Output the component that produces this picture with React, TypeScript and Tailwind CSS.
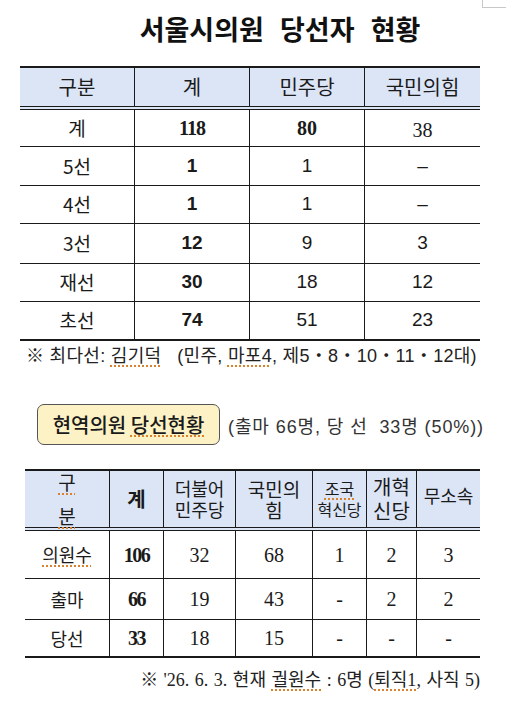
import React from "react";

const sans = "font-['Liberation_Sans','Noto_Sans_CJK_KR',sans-serif]";
const kr = "font-['Noto_Sans_CJK_KR','Liberation_Sans',sans-serif]";
const serif = "font-['Liberation_Serif','Noto_Sans_CJK_KR',serif]";
const wavy = "underline decoration-dotted decoration-[#d9822b] decoration-[1.5px] underline-offset-[3px]";

type Cell = { t: string; c: string };

const t1: { label: string; h: string; cells: Cell[] }[] = [
  { label: "계", h: "h-[37px]", cells: [
    { t: "118", c: `${serif} font-bold tracking-[-1px] text-[20px]` },
    { t: "80", c: `${serif} font-bold text-[20px]` },
    { t: "38", c: `${serif} text-[20px] pt-[4px]` },
  ] },
  { label: "5선", h: "h-[39px]", cells: [
    { t: "1", c: `${sans} font-bold text-[19px]` },
    { t: "1", c: `${sans} text-[19px]` },
    { t: "–", c: `${sans} text-[19px]` },
  ] },
  { label: "4선", h: "h-[38px]", cells: [
    { t: "1", c: `${sans} font-bold text-[19px]` },
    { t: "1", c: `${sans} text-[19px]` },
    { t: "–", c: `${sans} text-[19px]` },
  ] },
  { label: "3선", h: "h-[40px]", cells: [
    { t: "12", c: `${sans} font-bold text-[19px]` },
    { t: "9", c: `${sans} text-[19px]` },
    { t: "3", c: `${sans} text-[19px]` },
  ] },
  { label: "재선", h: "h-[38px]", cells: [
    { t: "30", c: `${sans} font-bold text-[19px]` },
    { t: "18", c: `${sans} text-[19px]` },
    { t: "12", c: `${sans} text-[19px]` },
  ] },
];

const t2Widths = ["w-[85px]", "w-[54px]", "w-[72px]", "w-[77px]", "w-[54px]", "w-[50px]", "w-[63px]"];

const t2Rows: { label: React.ReactNode; h: string; vals: string[] }[] = [
  { label: <span className={wavy}>의원수</span>, h: "h-[48px] border-b border-[#1a1a1a]", vals: ["106", "32", "68", "1", "2", "3"] },
  { label: "출마", h: "h-[41px] border-b border-[#1a1a1a]", vals: ["66", "19", "43", "-", "2", "2"] },
  { label: "당선", h: "h-[38px] border-b-2 border-[#1a1a1a]", vals: ["33", "18", "15", "-", "-", "-"] },
];

export default function App() {
  return (
    <div className={`relative w-[506px] h-[704px] bg-white text-[#1a1a1a] ${kr}`}>
      <div className="absolute right-0 top-0 w-[24px] h-[8px] border-l border-b border-[#c8c8c8]" />

      {/* Title */}
      <div className="pt-[12px] h-[66px]">
        <div className={`h-[34px] leading-[34px] pl-[54px] text-center text-[27px] font-bold [word-spacing:10px] text-[#111] ${kr}`}>
          서울시의원 당선자 현황
        </div>
      </div>

      {/* Table 1 */}
      <div className="ml-[20px] w-[460px]">
        <div className="flex h-[44px] border-t-2 border-b-4 border-double border-t-[#1a1a1a] border-b-[#1a1a1a] bg-[#dce5f6]">
          {["구분", "계", "민주당", "국민의힘"].map((t, i) => (
            <div
              key={i}
              className={`w-[115px] flex items-center justify-center text-[20px] ${i < 3 ? "border-r border-[#1a1a1a]" : ""}`}
            >
              {t}
            </div>
          ))}
        </div>
        {t1.map((r, ri) => (
          <div key={ri} className={`flex ${r.h} border-b border-[#1a1a1a]`}>
            <div className="w-[115px] flex items-center justify-center text-[19px] border-r border-[#1a1a1a]">{r.label}</div>
            {r.cells.map((c, i) => (
              <div
                key={i}
                className={`w-[115px] flex items-center justify-center ${c.c} ${i < 2 ? "border-r border-[#1a1a1a]" : ""}`}
              >
                {c.t}
              </div>
            ))}
          </div>
        ))}
        <div className="flex h-[39px] border-b-2 border-[#1a1a1a]">
          <div className="w-[115px] flex items-center justify-center text-[19px] border-r border-[#1a1a1a]">초선</div>
          <div className={`w-[115px] flex items-center justify-center ${sans} font-bold text-[19px] border-r border-[#1a1a1a]`}>74</div>
          <div className={`w-[115px] flex items-center justify-center ${sans} text-[19px] border-r border-[#1a1a1a]`}>51</div>
          <div className={`w-[115px] flex items-center justify-center ${sans} text-[19px]`}>23</div>
        </div>
      </div>

      {/* Note */}
      <div className={`mt-[4px] ml-[26px] h-[22px] leading-[22px] text-[18px] tracking-[0.3px] text-[#222] whitespace-pre ${sans}`}>
        {"※ 최다선: "}
        <span className={wavy}>김기덕</span>
        {"   (민주, "}
        <span className={wavy}>마포4</span>
        {", 제5・8・10・11・12대)"}
      </div>

      {/* Box + summary */}
      <div className="mt-[37px] ml-[37px] flex items-center">
        <div className="w-[183px] h-[41px] rounded-[7px] border-[1.5px] border-[#555] bg-[#fdf2c6] flex items-center justify-center">
          <span className={`text-[20px] font-medium text-[#1a1a1a] ${kr}`}>
            현역의원 <span className={wavy}>당선현황</span>
          </span>
        </div>
        <div className={`ml-[8px] pt-[6px] text-[18px] tracking-[0.9px] text-[#333] whitespace-pre ${sans}`}>
          {"(출마 66명, 당 선  33명 (50%))"}
        </div>
      </div>

      {/* Table 2 */}
      <div className="mt-[24px] ml-[25px] w-[455px]">
        <div className="flex h-[62px] border-t-2 border-b-4 border-double border-t-[#1a1a1a] border-b-[#1a1a1a] bg-[#dce5f6]">
          <div className={`${t2Widths[0]} flex flex-col items-center justify-center gap-[12px] text-[19px] leading-[22px] border-r border-[#1a1a1a]`}>
            <span className={wavy}>구</span>
            <span className={wavy}>분</span>
          </div>
          <div className={`${t2Widths[1]} flex items-center justify-center text-[20px] font-bold border-r border-[#1a1a1a]`}>계</div>
          <div className={`${t2Widths[2]} flex flex-col items-center justify-center text-[18px] leading-[21px] border-r border-[#1a1a1a]`}>
            <span>더불어</span>
            <span>민주당</span>
          </div>
          <div className={`${t2Widths[3]} flex flex-col items-center justify-center text-[19px] leading-[21px] border-r border-[#1a1a1a]`}>
            <span>국민의</span>
            <span>힘</span>
          </div>
          <div className={`${t2Widths[4]} flex flex-col items-center justify-center text-[16px] leading-[21px] border-r border-[#1a1a1a]`}>
            <span className={wavy}>조국</span>
            <span>혁신당</span>
          </div>
          <div className={`${t2Widths[5]} flex flex-col items-center justify-center text-[20px] leading-[24px] border-r border-[#1a1a1a]`}>
            <span>개혁</span>
            <span>신당</span>
          </div>
          <div className={`${t2Widths[6]} flex items-center justify-center text-[18px] pb-[8px]`}>무소속</div>
        </div>
        {t2Rows.map((r, ri) => (
          <div key={ri} className={`flex ${r.h}`}>
            <div className={`${t2Widths[0]} flex items-center justify-center text-[18px] border-r border-[#1a1a1a]`}>{r.label}</div>
            {r.vals.map((v, i) => (
              <div
                key={i}
                className={`${t2Widths[i + 1]} flex items-center justify-center ${serif} text-[20px] ${i === 0 ? "font-bold tracking-[-1.5px]" : ""} ${i < 5 ? "border-r border-[#1a1a1a]" : ""}`}
              >
                {v}
              </div>
            ))}
          </div>
        ))}
      </div>

      {/* Footnote */}
      <div className={`mt-[11px] mr-[26px] h-[22px] leading-[22px] text-right text-[18px] [word-spacing:1px] text-[#222] whitespace-pre ${serif}`}>
        {"※ '26. 6. 3. 현재 "}
        <span className={wavy}>궐원수</span>
        {" : 6명 ("}
        <span className={wavy}>퇴직1</span>
        {", 사직 5)"}
      </div>
    </div>
  );
}
